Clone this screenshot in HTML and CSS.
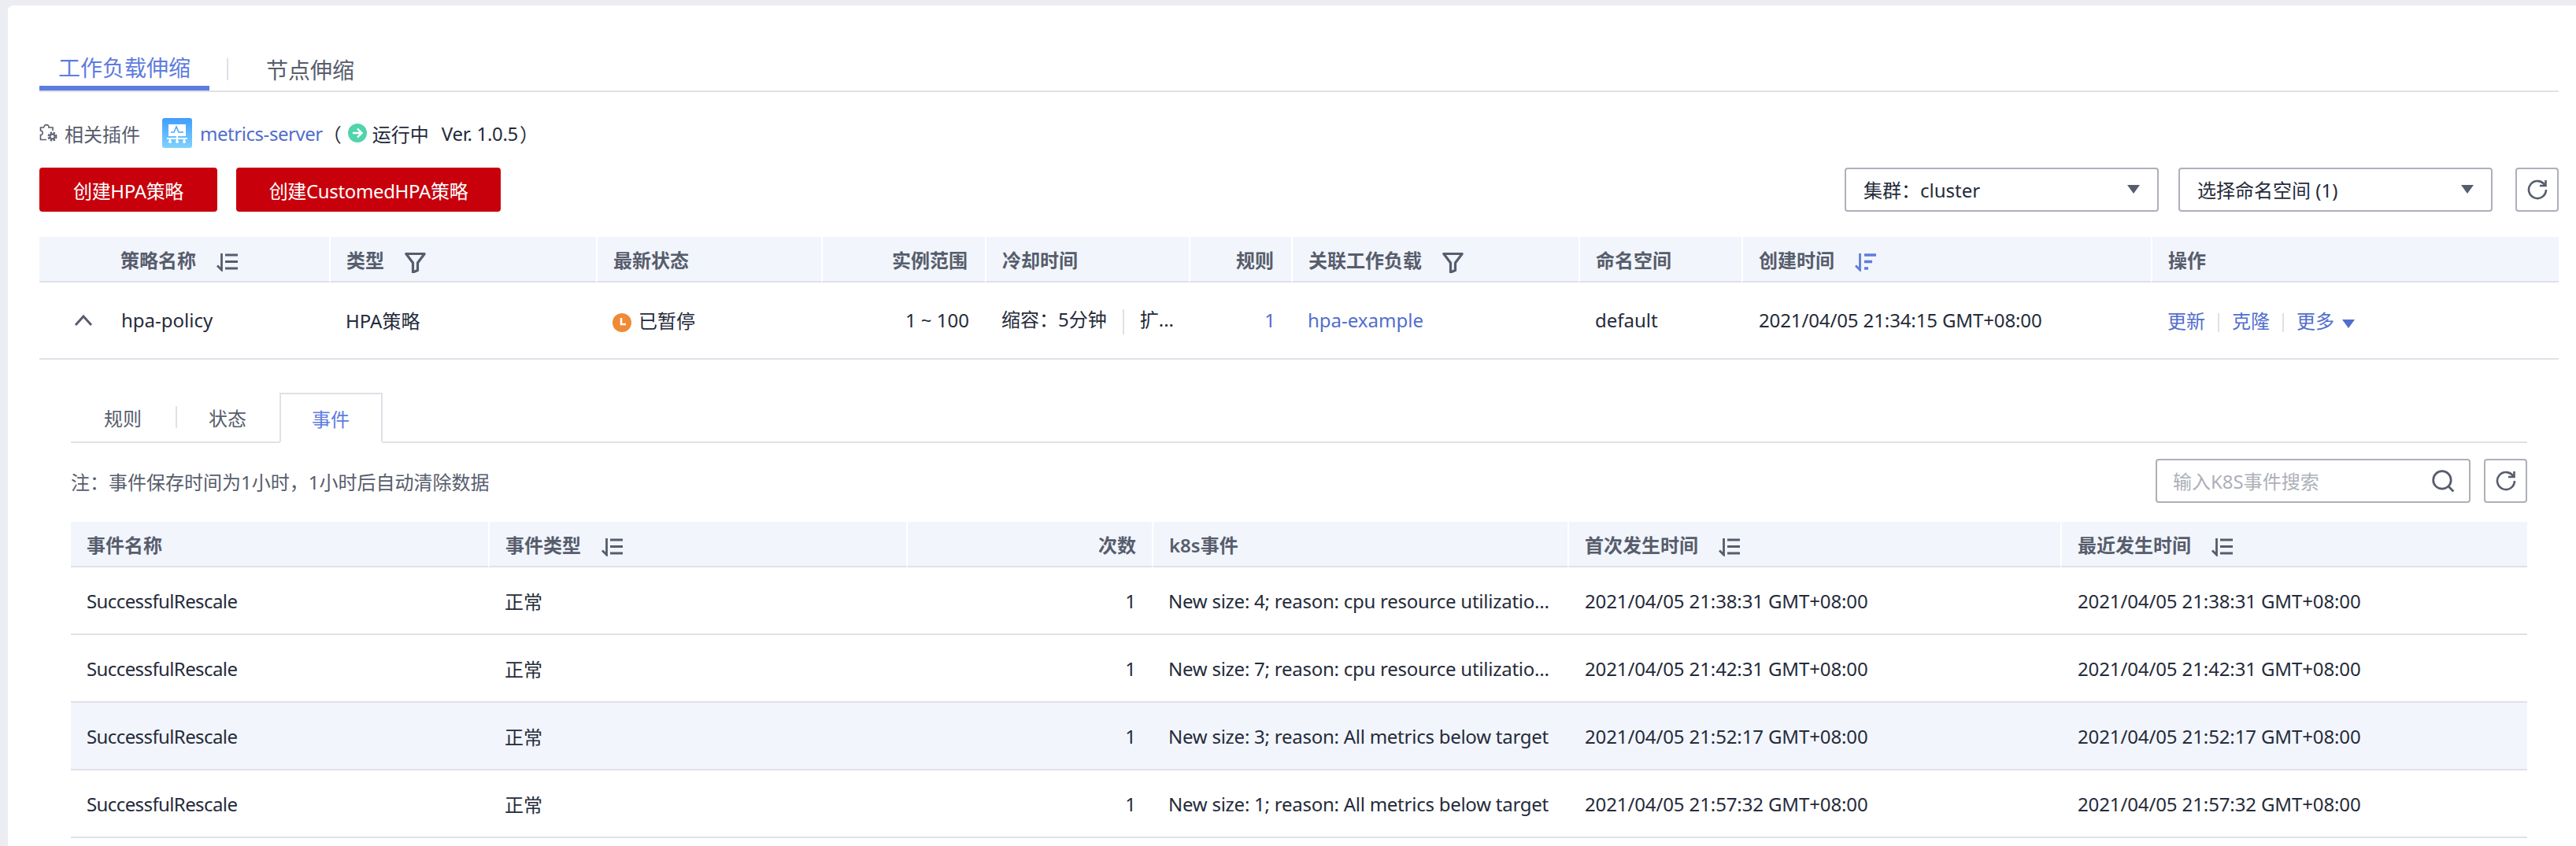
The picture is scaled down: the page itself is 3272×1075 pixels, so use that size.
FILE: index.html
```html
<!DOCTYPE html>
<html lang="zh-CN">

<head>
    <meta charset="UTF-8">
    <title>工作负载伸缩</title>
    <link rel="stylesheet" href="styles.css">
</head>

<body>
    <svg class="defs" width="0" height="0">
        <symbol id="sort" viewBox="0 0 29 24">
            <path d="M7.500 1v21L2 16.500" fill="none" stroke="currentColor" stroke-width="2.800"/>
            <path d="M12 3h16M12 11.500h16M12 20h16" fill="none" stroke="currentColor" stroke-width="3.200"/>
        </symbol>
        <symbol id="sort-desc" viewBox="0 0 29 24">
            <path d="M7.500 1v21L2 16.500" fill="none" stroke="currentColor" stroke-width="2.800"/>
            <path d="M13 3h15M13 11.500h10M13 20h5" fill="none" stroke="currentColor" stroke-width="3.600"/>
        </symbol>
        <symbol id="filter" viewBox="0 0 27 27">
            <path d="M1.800 2.500h23.400l-8.700 11.500v9.500l-6 2.500V14z" fill="none" stroke="currentColor" stroke-width="3.200" stroke-linejoin="round"/>
        </symbol>
        <symbol id="refresh" viewBox="0 0 26 26">
            <path d="M22.500 7.500A11 11 0 1 0 24 13" fill="none" stroke="currentColor" stroke-width="2.600"/>
            <path d="M16 8h7.500V1" fill="none" stroke="currentColor" stroke-width="2.600"/>
        </symbol>
    </svg>

    <div class="card">
        <div class="tabs">
            <a class="tab active">工作负载伸缩</a>
            <span class="tab-sep"></span>
            <a class="tab second">节点伸缩</a>
        </div>

        <div class="plugin-row">
            <svg class="gear" viewBox="0 0 24 24">
                <path d="M6 5C5 .5 13 .5 12 5h5v4M9 20.500H1.500v-6c3.500.5 3.500-6 0-5.500V5H6" fill="none" stroke="#575d6c" stroke-width="1.600"/>
                <circle cx="16.500" cy="16.500" r="5" fill="none" stroke="#575d6c" stroke-width="2" stroke-dasharray="2.500 1.500"/>
                <circle cx="16.500" cy="16.500" r="3" fill="none" stroke="#575d6c" stroke-width="1.800"/>
            </svg>
            <span class="plugin-label">相关插件</span>
            <svg class="plugin-logo" viewBox="0 0 38 38">
                <defs>
                    <linearGradient id="logo-bg" x1="0" y1="0" x2="0" y2="1">
                        <stop offset="0" stop-color="#3f9dff"/>
                        <stop offset="1" stop-color="#80d2fd"/>
                    </linearGradient>
                </defs>
                <rect width="38" height="38" rx="3" fill="url(#logo-bg)"/>
                <rect x="8" y="8" width="22" height="15" fill="#fff"/>
                <path d="M11 18h4l3-7 3 7h6" fill="none" stroke="#4ba6fd" stroke-width="1.500"/>
                <path d="M6 26h26M10 26v3M19 23v6M28 26v3" fill="none" stroke="#fff" stroke-width="2"/>
                <circle cx="10" cy="30" r="2" fill="#fff"/>
                <circle cx="19" cy="30" r="2" fill="#fff"/>
                <circle cx="28" cy="30" r="2" fill="#fff"/>
            </svg>
            <a class="link plugin-name">metrics-server</a>
            <span class="paren-open">（</span>
            <svg class="run-icon" viewBox="0 0 24 24">
                <circle cx="12" cy="12" r="12" fill="#50d4ab"/>
                <path d="M6 12h11M12 6.500l5.500 5.500-5.500 5.500" fill="none" stroke="#fff" stroke-width="2.400"/>
            </svg>
            <span class="run-text">运行中</span>
            <span class="run-ver">Ver. 1.0.5</span>
            <span class="paren-close">）</span>
        </div>

        <div class="toolbar">
            <button class="btn-create first">创建HPA策略</button>
            <button class="btn-create">创建CustomedHPA策略</button>
            <div class="select push"><span>集群：cluster</span><i class="caret"></i></div>
            <div class="select"><span>选择命名空间 (1)</span><i class="caret"></i></div>
            <button class="btn-icon"><svg class="icon-refresh"><use href="#refresh"/></svg></button>
        </div>

        <table class="grid policy">
            <colgroup>
                <col class="p1"><col class="p2"><col class="p3"><col class="p4"><col class="p5"><col class="p6">
                <col class="p7"><col class="p8"><col class="p9"><col class="p10"><col class="p11">
            </colgroup>
            <thead>
                <tr>
                    <th class="no-sep"></th>
                    <th class="no-sep">策略名称<svg class="icon-sort"><use href="#sort"/></svg></th>
                    <th>类型<svg class="icon-filter"><use href="#filter"/></svg></th>
                    <th>最新状态</th>
                    <th class="num">实例范围</th>
                    <th>冷却时间</th>
                    <th class="num">规则</th>
                    <th>关联工作负载<svg class="icon-filter"><use href="#filter"/></svg></th>
                    <th>命名空间</th>
                    <th>创建时间<svg class="icon-sort blue"><use href="#sort-desc"/></svg></th>
                    <th>操作</th>
                </tr>
            </thead>
            <tbody>
                <tr>
                    <td class="expand"><svg class="chevron" viewBox="0 0 24 14"><path d="M2 13 12 2l10 11" fill="none" stroke="#575d6c" stroke-width="3"/></svg></td>
                    <td>hpa-policy</td>
                    <td>HPA策略</td>
                    <td><svg class="status-icon" viewBox="0 0 24 24"><circle cx="12" cy="12" r="12" fill="#f08a36"/><path d="M11 6v8h6" fill="none" stroke="#fff" stroke-width="2.600"/></svg>已暂停</td>
                    <td class="num">1 ~ 100</td>
                    <td class="cool-cell">缩容：5分钟<span class="cool-sep"></span>扩...</td>
                    <td class="num"><a class="link">1</a></td>
                    <td><a class="link">hpa-example</a></td>
                    <td>default</td>
                    <td class="date">2021/04/05 21:34:15 GMT+08:00</td>
                    <td class="actions"><a class="link">更新</a><span class="act-sep"></span><a class="link">克隆</a><span class="act-sep"></span><a class="link">更多</a><i class="caret blue"></i></td>
                </tr>
            </tbody>
        </table>

        <div class="detail">
            <div class="subtabs">
                <a class="subtab">规则</a>
                <span class="subtab-sep"></span>
                <a class="subtab">状态</a>
                <a class="subtab active">事件</a>
            </div>

            <div class="note-row">
                <span class="note">注：事件保存时间为1小时，1小时后自动清除数据</span>
                <div class="search push">
                    <input type="text" placeholder="输入K8S事件搜索">
                    <svg class="icon-search" viewBox="0 0 28 28"><circle cx="13" cy="13" r="10.500" fill="none" stroke="#575d6c" stroke-width="2.600"/><path d="m20.500 20.500 6 6" fill="none" stroke="#575d6c" stroke-width="2.600"/></svg>
                </div>
                <button class="btn-icon small"><svg class="icon-refresh"><use href="#refresh"/></svg></button>
            </div>

            <table class="grid events">
                <colgroup>
                    <col class="e1"><col class="e2"><col class="e3"><col class="e4"><col class="e5"><col class="e6">
                </colgroup>
                <thead>
                    <tr>
                        <th class="no-sep">事件名称</th>
                        <th>事件类型<svg class="icon-sort"><use href="#sort"/></svg></th>
                        <th class="num">次数</th>
                        <th>k8s事件</th>
                        <th>首次发生时间<svg class="icon-sort"><use href="#sort"/></svg></th>
                        <th>最近发生时间<svg class="icon-sort"><use href="#sort"/></svg></th>
                    </tr>
                </thead>
                <tbody>
                    <tr>
                        <td class="name">SuccessfulRescale</td>
                        <td>正常</td>
                        <td class="num">1</td>
                        <td class="msg">New size: 4; reason: cpu resource utilization above target</td>
                        <td class="date">2021/04/05 21:38:31 GMT+08:00</td>
                        <td class="date">2021/04/05 21:38:31 GMT+08:00</td>
                    </tr>
                    <tr>
                        <td class="name">SuccessfulRescale</td>
                        <td>正常</td>
                        <td class="num">1</td>
                        <td class="msg">New size: 7; reason: cpu resource utilization above target</td>
                        <td class="date">2021/04/05 21:42:31 GMT+08:00</td>
                        <td class="date">2021/04/05 21:42:31 GMT+08:00</td>
                    </tr>
                    <tr class="hover">
                        <td class="name">SuccessfulRescale</td>
                        <td>正常</td>
                        <td class="num">1</td>
                        <td class="msg">New size: 3; reason: All metrics below target</td>
                        <td class="date">2021/04/05 21:52:17 GMT+08:00</td>
                        <td class="date">2021/04/05 21:52:17 GMT+08:00</td>
                    </tr>
                    <tr>
                        <td class="name">SuccessfulRescale</td>
                        <td>正常</td>
                        <td class="num">1</td>
                        <td class="msg">New size: 1; reason: All metrics below target</td>
                        <td class="date">2021/04/05 21:57:32 GMT+08:00</td>
                        <td class="date">2021/04/05 21:57:32 GMT+08:00</td>
                    </tr>
                </tbody>
            </table>
        </div>
    </div>
</body>

</html>
```

FILE: styles.css
```css
* {
    box-sizing: border-box;
}
html, body {
    height: 100%;
}
body {
    margin: 0;
    padding: 7px 0 0 10px;
    overflow: hidden;
    background-color: #ebedf3;
    color: #252b3a;
    font-family: "Noto Sans", "Noto Sans CJK SC", sans-serif;
    font-size: 24px;
}
.defs {
    position: absolute;
}
.card {
    height: 100%;
    padding: 53px 22px 0 40px;
    background: white;
    border-top-left-radius: 6px;
}
.link {
    color: #526ecc;
}

/* top tabs */
.tabs {
    display: flex;
    align-items: center;
    height: 57px;
    border-bottom: 2px solid #dfe1e8;
}
.tab {
    display: flex;
    align-items: center;
    height: 55px;
    padding: 0 24px;
    font-size: 28px;
    color: #575d6c;
}
.tab.active {
    color: #5e7ce0;
    border-bottom: 6px solid #5e7ce0;
}
.tab.second {
    margin-left: 24px;
}
.tab-sep {
    width: 2px;
    height: 28px;
    margin-left: 22px;
    background-color: #dfe1e8;
}

/* plugin row */
.plugin-row {
    display: flex;
    align-items: center;
    height: 38px;
    margin-top: 33px;
}
.gear {
    width: 24px;
    height: 24px;
}
.plugin-label {
    margin-left: 8px;
    color: #575d6c;
}
.plugin-logo {
    width: 38px;
    height: 38px;
    margin-left: 28px;
}
.plugin-name {
    margin-left: 10px;
    letter-spacing: -0.45px;
}
.paren-open {
    width: 32px;
}
.run-icon {
    width: 24px;
    height: 24px;
}
.run-text {
    margin-left: 7px;
}
.run-ver {
    margin-left: 16px;
    letter-spacing: -0.3px;
}
.paren-close {
    margin-left: 2px;
}

/* toolbar */
.toolbar {
    display: flex;
    align-items: center;
    margin-top: 25px;
}
.push {
    margin-left: auto;
}
.btn-create {
    width: 336px;
    height: 56px;
    padding: 0;
    border: none;
    border-radius: 4px;
    background-color: #c7000b;
    color: white;
    font-family: inherit;
    font-size: 24px;
    letter-spacing: -0.35px;
}
.btn-create.first {
    width: 226px;
    margin-right: 24px;
}
.select {
    display: flex;
    align-items: center;
    justify-content: space-between;
    width: 399px;
    height: 56px;
    padding: 0 22px 2px;
    border: 2px solid #adb0b8;
    border-radius: 4px;
}
.select + .select {
    margin-left: 25px;
}
.caret {
    display: inline-block;
    width: 0;
    height: 0;
    border-left: 8px solid transparent;
    border-right: 8px solid transparent;
    border-top: 11px solid #575d6c;
}
.caret.blue {
    margin-left: 10px;
    border-top-color: #526ecc;
}
.btn-icon {
    display: flex;
    align-items: center;
    justify-content: center;
    width: 55px;
    height: 56px;
    margin-left: 29px;
    padding: 0;
    border: 2px solid #adb0b8;
    border-radius: 4px;
    background: white;
    color: #575d6c;
}
.btn-icon.small {
    margin-left: 17px;
}
.icon-refresh {
    width: 26px;
    height: 26px;
}

/* tables */
.grid {
    width: 100%;
    table-layout: fixed;
    border-collapse: separate;
    border-spacing: 0;
}
.grid th {
    height: 58px;
    padding: 0 20px;
    border-left: 2px solid white;
    border-bottom: 2px solid #dfe1e8;
    background-color: #f2f5fc;
    color: #575d6c;
    font-weight: 600;
    text-align: left;
    white-space: nowrap;
}
.grid th.no-sep {
    border-left: none;
}
.grid td {
    padding: 0 20px 0 21px;
    border-bottom: 2px solid #dfe1e8;
    white-space: nowrap;
    overflow: hidden;
    text-overflow: ellipsis;
}
.grid th.num, .grid td.num {
    text-align: right;
}
.grid td.date {
    padding-left: 22px;
    letter-spacing: -0.12px;
}
.grid td.name {
    letter-spacing: -0.6px;
}
.grid td.msg {
    padding-right: 18px;
    letter-spacing: -0.25px;
}
.policy {
    margin-top: 32px;
}
.policy td {
    height: 98px;
    padding-bottom: 2px;
}
.policy th.num {
    padding-right: 22px;
}
.policy td.expand {
    padding: 0 0 0 44px;
}
.policy td.cool-cell {
    padding-right: 0;
    text-overflow: clip;
}
.chevron {
    display: block;
    width: 24px;
    height: 14px;
}
.p1 { width: 83px; }
.p2 { width: 285px; }
.p3 { width: 339px; }
.p4 { width: 286px; }
.p5 { width: 208px; }
.p6 { width: 259px; }
.p7 { width: 130px; }
.p8 { width: 365px; }
.p9 { width: 207px; }
.p10 { width: 520px; }
.p11 { width: 518px; }
.icon-sort {
    width: 29px;
    height: 24px;
    margin-left: 25px;
    vertical-align: -5px;
    color: #575d6c;
}
.icon-sort.blue {
    color: #5e7ce0;
}
.icon-filter {
    width: 27px;
    height: 27px;
    margin-left: 26px;
    vertical-align: -7px;
    color: #575d6c;
}
.status-icon {
    width: 24px;
    height: 24px;
    margin-right: 9px;
    vertical-align: -5px;
}
.cool-sep {
    display: inline-block;
    width: 2px;
    height: 32px;
    margin: 0 20px;
    background-color: #dfe1e8;
    vertical-align: middle;
}
.actions .act-sep {
    display: inline-block;
    width: 2px;
    height: 24px;
    margin: 0 16px;
    background-color: #dfe1e8;
    vertical-align: middle;
}

/* event detail */
.detail {
    padding: 42px 40px 0;
}
.subtabs {
    display: flex;
    align-items: center;
    height: 64px;
    border-bottom: 2px solid #dfe1e8;
}
.subtab {
    display: flex;
    align-items: center;
    height: 64px;
    padding: 0 43px 0 42px;
    color: #575d6c;
}
.subtab-sep {
    width: 2px;
    height: 28px;
    margin-right: -2px;
    background-color: #dfe1e8;
}
.subtab.active {
    margin-bottom: -2px;
    margin-left: -1px;
    padding: 0 40px 0 39px;
    border: 2px solid #dfe1e8;
    border-bottom: 2px solid white;
    color: #5e7ce0;
}
.note-row {
    display: flex;
    align-items: center;
    margin-top: 20px;
}
.note {
    color: #575d6c;
}
.search {
    display: flex;
    align-items: center;
    width: 400px;
    height: 56px;
    padding: 0 18px 0 20px;
    border: 2px solid #adb0b8;
    border-radius: 4px;
}
.search input {
    flex: 1;
    min-width: 0;
    border: none;
    outline: none;
    padding: 0;
    font-family: inherit;
    font-size: 24px;
}
.search input::placeholder {
    color: #adb0b8;
}
.icon-search {
    width: 30px;
    height: 30px;
}
.events {
    margin-top: 24px;
}
.events td {
    height: 86px;
}
.events tr.hover td {
    background-color: #f2f5fc;
}
.events td:first-child, .events th:first-child {
    padding-left: 20px;
}
.e1 { width: 530px; }
.e2 { width: 531px; }
.e3 { width: 312px; }
.e4 { width: 528px; }
.e5 { width: 626px; }
.e6 { width: 593px; }
```
